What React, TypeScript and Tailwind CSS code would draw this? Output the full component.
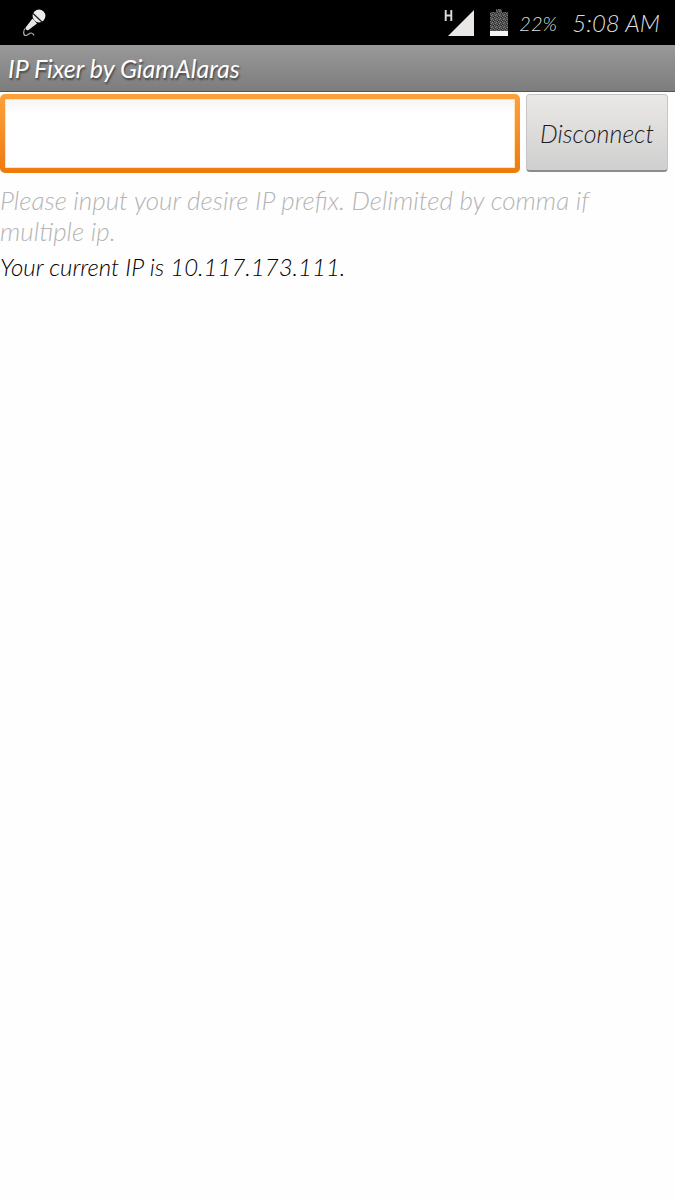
import { useState } from 'react';

function MicIcon() {
  return (
    <svg aria-hidden="true" className="h-[30px] w-[26px]" fill="none" viewBox="0 0 26 30">
      <circle cx="17" cy="8" fill="#ececec" r="6.4" />
      <path d="M10.5 10.5 15 15.5 6.5 22C5 23 2.5 20.8 4 19Z" fill="#e6e6e6" />
      <path d="M11 5.5 20 14" stroke="#222222" strokeWidth="1.3" />
      <path d="M3 20.5C1 23 1.2 27.3 3.6 27.5C6 27.6 7 24.8 9.2 25C11 25.2 11.6 26 12 27.6" stroke="#b5b5b5" strokeWidth="1.2" />
    </svg>
  );
}

function SignalIcon() {
  return (
    <svg aria-label="H" className="h-[28px] w-[31px]" fill="none" role="img" viewBox="0 0 31 28">
      <path d="M1.7 1V12M7.3 1V12M1.7 6.5H7.3" stroke="#dddddd" strokeWidth="1.9" />
      <path d="M4 27 30 1V27Z" fill="#e9e8e6" />
    </svg>
  );
}

function BatteryIcon() {
  return (
    <svg aria-hidden="true" className="h-[28px] w-[18px]" shapeRendering="crispEdges" viewBox="0 0 18 28">
      <defs>
        <pattern height="4" id="battery-dots" patternUnits="userSpaceOnUse" width="4">
          <rect fill="#4a4a4a" height="4" width="4" />
          <path d="M0 0h1v1H0zM2 1h1v1H2zM1 2h1v1H1zM3 3h1v1H3z" fill="#7c7c7c" />
          <path d="M3 0h1v1H3zM0 3h1v1H0z" fill="#222222" />
        </pattern>
      </defs>
      <path d="M6 0H12V3H18V22H0V3H6Z" fill="url(#battery-dots)" />
      <rect fill="#f4f4f4" height="5" width="18" y="22" />
    </svg>
  );
}

function StatusBar() {
  return (
    <div className="flex h-[45px] items-center justify-between bg-black pl-[22px] pr-[15px] text-[#dedede]">
      <MicIcon />
      <div className="flex items-center gap-[15px]">
        <SignalIcon />
        <div className="flex items-center gap-[11px]">
          <BatteryIcon />
          <span className="w-[38px] whitespace-nowrap text-[20px] leading-[28px]">22%</span>
        </div>
        <span className="whitespace-nowrap text-[24px] leading-[28px]">5:08 AM</span>
      </div>
    </div>
  );
}

export default function App() {
  const [prefix, setPrefix] = useState('');

  return (
    <div className="min-h-screen bg-[#fefefe] font-['Lato','Liberation_Sans',sans-serif] font-light italic">
      <StatusBar />
      <header className="flex h-[47px] items-center border-b border-[#555555] bg-linear-to-b from-[#999999] to-[#7d7d7d] px-[8px]">
        <h1 className="text-[25px] font-normal leading-[30px] text-white [text-shadow:1px_2px_2px_#444444]">
          IP Fixer by GiamAlaras
        </h1>
      </header>
      <main>
        <div className="flex gap-[6px] pr-[7px] pt-[2px]">
          <div className="h-[79px] min-w-0 flex-1 rounded-[5px] bg-linear-to-b from-[#fca13a] to-[#ee7a0c] p-[5px]">
            <input
              aria-describedby="prefix-hint"
              aria-label="IP prefix"
              className="h-full w-full border border-[#ffe3b8] bg-white bg-linear-to-b from-[#f5f5f5] to-white to-20% px-[10px] text-[24px] text-black outline-none"
              onChange={(event) => setPrefix(event.target.value)}
              type="text"
              value={prefix}
            />
          </div>
          <button
            className="h-[78px] w-[142px] rounded-[4px] border border-b-2 border-[#c5c5c5] border-b-[#8c8c8c] bg-linear-to-b from-[#ebe9e7] to-[#cfcfcf] text-[25px] italic leading-[30px] text-[#1c1c1c]"
            type="button"
          >
            Disconnect
          </button>
        </div>
        <p className="pt-[12px] text-[26px] leading-[31px] text-[#b5b5b5]" id="prefix-hint">
          Please input your desire IP prefix. Delimited by comma if multiple ip.
        </p>
        <p className="pt-[4px] text-[24px] leading-[31px] text-black">Your current IP is 10.117.173.111.</p>
      </main>
    </div>
  );
}
